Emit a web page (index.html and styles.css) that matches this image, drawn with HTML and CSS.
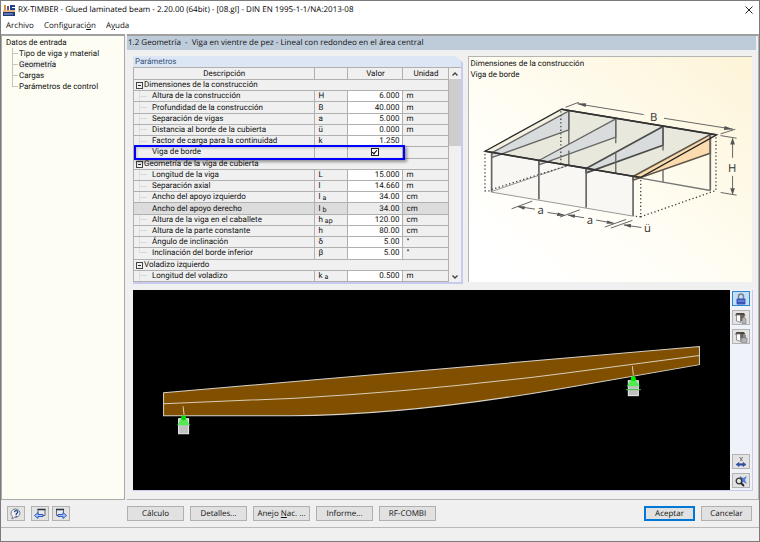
FILE: index.html
```html
<!DOCTYPE html>
<html lang="es">
<head>
<meta charset="utf-8">
<meta name="viewport" content="width=device-width, initial-scale=1">
<title>RX-TIMBER - Glued laminated beam</title>
<link rel="stylesheet" href="styles.css">
</head>
<body>
<div class="window">
  <header class="titlebar">
    <svg class="app-icon" viewBox="0 0 12 12" aria-hidden="true">
      <rect x="0" y="8" width="12" height="4" fill="#1d3b7a"/>
      <rect x="1" y="1" width="2" height="5" fill="#e08a3c"/>
      <rect x="4" y="2" width="2" height="4" fill="#4a5a80"/>
      <path d="M7 1h5v2H9v1h3v3H7z" fill="#25408a"/>
      <rect x="0" y="6" width="12" height="2" fill="#efb27c"/>
      <path d="M1 10h9" stroke="#9db2dc"/>
    </svg>
    <h1 class="title">RX-TIMBER - Glued laminated beam - 2.20.00 (64bit) - [08.gl] - DIN EN 1995-1-1/NA:2013-08</h1>
    <button class="close" type="button" aria-label="Cerrar">
      <svg viewBox="0 0 8 8" aria-hidden="true"><path d="M.5.5l7 7M7.500.5l-7 7" fill="none" stroke="#222"/></svg>
    </button>
  </header>
  <nav class="menubar">
    <button type="button">Archivo</button>
    <button type="button">Configuraci<u>ó</u>n</button>
    <button type="button">A<u>y</u>uda</button>
  </nav>

  <div class="workspace">
    <aside class="tree">
      <div class="tree-root">Datos de entrada</div>
      <ul>
        <li>Tipo de viga y material</li>
        <li><span class="current">Geometría</span></li>
        <li>Cargas</li>
        <li>Parámetros de control</li>
      </ul>
    </aside>

    <main class="page">
      <h2 class="page-title">1.2 Geometría&nbsp; -&nbsp; Viga en vientre de pez - Lineal con redondeo en el área central</h2>
      <div class="upper">
        <section class="params">
          <h3 class="params-title">Parámetros</h3>
          <div class="params-body">
            <table>
              <colgroup><col><col class="c-sym"><col class="c-val"><col class="c-unit"></colgroup>
              <thead><tr><th>Descripción</th><th></th><th>Valor</th><th>Unidad</th></tr></thead>
              <tbody>
                <tr class="group"><td colspan="4">Dimensiones de la construcción</td></tr>
                <tr><td>Altura de la construcción</td><td>H</td><td>6.000</td><td>m</td></tr>
                <tr><td>Profundidad de la construcción</td><td>B</td><td>40.000</td><td>m</td></tr>
                <tr><td>Separación de vigas</td><td>a</td><td>5.000</td><td>m</td></tr>
                <tr><td>Distancia al borde de la cubierta</td><td>ü</td><td>0.000</td><td>m</td></tr>
                <tr><td>Factor de carga para la continuidad</td><td>k</td><td>1.250</td><td></td></tr>
                <tr class="marked last"><td><label for="edge-beam">Viga de borde</label></td><td></td><td><input type="checkbox" id="edge-beam" checked></td><td></td></tr>
                <tr class="group"><td colspan="4">Geometría de la viga de cubierta</td></tr>
                <tr><td>Longitud de la viga</td><td>L</td><td>15.000</td><td>m</td></tr>
                <tr><td>Separación axial</td><td>l</td><td>14.660</td><td>m</td></tr>
                <tr><td>Ancho del apoyo izquierdo</td><td>l <sub>a</sub></td><td>34.00</td><td>cm</td></tr>
                <tr class="selected"><td>Ancho del apoyo derecho</td><td>l <sub>b</sub></td><td>34.00</td><td>cm</td></tr>
                <tr><td>Altura de la viga en el caballete</td><td>h <sub>ap</sub></td><td>120.00</td><td>cm</td></tr>
                <tr><td>Altura de la parte constante</td><td>h</td><td>80.00</td><td>cm</td></tr>
                <tr><td>Ángulo de inclinación</td><td>δ</td><td>5.00</td><td>°</td></tr>
                <tr class="last"><td>Inclinación del borde inferior</td><td>β</td><td>5.00</td><td>°</td></tr>
                <tr class="group"><td colspan="4">Voladizo izquierdo</td></tr>
                <tr><td>Longitud del voladizo</td><td>k <sub>a</sub></td><td>0.500</td><td>m</td></tr>
              </tbody>
            </table>
            <div class="scrollbar">
              <button type="button" aria-label="Subir"><svg viewBox="0 0 8 6" aria-hidden="true"><path d="M1.500 4.500L4 2l2.500 2.500" fill="none" stroke="#444" stroke-width="1.400"/></svg></button>
              <div class="track"><div class="thumb"></div></div>
              <button type="button" aria-label="Bajar"><svg viewBox="0 0 8 6" aria-hidden="true"><path d="M1.500 1.500L4 4l2.500-2.500" fill="none" stroke="#444" stroke-width="1.400"/></svg></button>
            </div>
          </div>
        </section>

        <section class="picture">
          <p>Dimensiones de la construcción</p>
          <p>Viga de borde</p>
          <svg viewBox="12 0 849 603" role="img" aria-label="B H a a ü">
            <path d="M80 217L505 288V407L80 335z" fill="#f8f7f3"/>
            <path d="M60 212L290 86L756 163L527 291z" fill="#e9e8dd"/>
            <path d="M60 212L290 86L312 90L80 216z" fill="#f5f2e2"/>
            <g fill="#d9dcdc" stroke="#666" stroke-width="4" stroke-linejoin="round">
              <path d="M80 217L312 91V148L80 231z"/>
              <path d="M222 240L453 115V170L222 253z"/>
              <path d="M364 264L595 138V194L364 277z" stroke="#4b4b4b" stroke-width="5"/>
            </g>
            <path d="M505 288L737 162V218L505 299z" fill="#fcdcae" stroke="#5b5347" stroke-width="5"/>
            <g fill="none" stroke="#666" stroke-width="5">
              <path d="M80 217V335M222 240V357M364 264V382M505 288V407M737 162V330"/>
              <path d="M312 90V190M312 210V255M453 115V188M453 216V278M595 138V210M595 266V305" stroke-width="4"/>
            </g>
            <path d="M80 335L505 407M80 333L312 254" fill="none" stroke="#999" stroke-width="3"/>
            <path d="M312 254L364 262M527 293L737 330" fill="none" stroke="#777" stroke-width="4"/>
            <path d="M60 212L290 86L756 163L527 291z" fill="none" stroke="#262626" stroke-width="4"/>
            <path d="M60 212L527 291M290 86L756 163" fill="none" stroke="#333" stroke-width="5"/>
            <g fill="none" stroke="#444" stroke-width="4" stroke-dasharray="4 7">
              <path d="M60 220V331H80M80 327L312 254M288 92V248M754 170V330L528 409V296M528 409L505 407"/>
            </g>
            <g fill="none" stroke="#666" stroke-width="3">
              <path d="M340 70L537 102M598 113L806 146M302 80L342 65M768 160L812 146M768 165L816 173M768 336L816 344"/>
              <path d="M804 176V232M804 286V340"/>
              <path d="M158 378L210 386M248 396L298 404M310 404L358 412M394 419L446 428M478 434L530 441"/>
              <path d="M140 385L202 362M285 410L345 388M420 440L484 417M438 443L503 420"/>
            </g>
            <g fill="#555">
              <path d="M336 69L364 68L362 79zM806 146L778 148L780 136zM804 171L797 192H811zM804 343L797 323H811z"/>
              <path d="M156 378L180 377L178 388zM302 405L276 407L279 396zM306 403L331 402L329 413zM450 429L425 430L428 420zM475 433L499 431L498 442z"/>
            </g>
            <g class="dims">
              <text x="556" y="121">B</text><text x="790" y="274">H</text>
              <text x="218" y="402">a</text><text x="366" y="430">a</text><text x="538" y="456">ü</text>
            </g>
          </svg>
        </section>
      </div>

      <section class="viewer">
        <svg class="scene" viewBox="133 290 596 200" role="img" aria-label="Viga">
          <path d="M163.500 392.500L698.500 346.500V364.500L560 388.500Q407 415 290 415.500H163.500z" fill="#805000" stroke="#d8d3ca"/>
          <path d="M163.500 403.500L295 398Q420 391.500 560 373.500L698.500 355.500" fill="none" stroke="#d8cdb8"/>
          <path d="M183 406L184 415M631.500 366L632.500 375" stroke="#d8cdb8"/>
          <rect x="178.500" y="418.500" width="10" height="15" fill="#c0c0c0" stroke="#f2f2f2"/>
          <path d="M183.500 415L190 425H177z" fill="#55e855"/>
          <circle cx="183.500" cy="417.500" r="2.500" fill="#00d800"/>
          <rect x="627.500" y="380.500" width="10" height="15" fill="#c0c0c0" stroke="#f2f2f2"/>
          <path d="M632.500 376L639 386H626z" fill="#55e855"/>
          <circle cx="632.500" cy="378.500" r="2.500" fill="#00f000"/>
          <path d="M625 389.500H640" stroke="#3fc43f"/>
        </svg>
        <div class="tools">
          <button type="button" class="on" aria-label="Bloquear"><svg viewBox="0 0 14 12" aria-hidden="true"><path d="M4.500 6V3.500a2.500 2.500 0 0 1 5 0V6" fill="none" stroke="#777f8c" stroke-width="1.500"/><rect x="2.500" y="5.500" width="9" height="6" rx="1" fill="#3657b8"/><path d="M4 8h6.500" stroke="#8aa5e8"/></svg></button>
          <button type="button" aria-label="Copiar vista"><svg viewBox="0 0 14 12" aria-hidden="true"><path d="M1 3.500L2.500 1H10l1.500 2.500z" fill="#4c443d"/><path d="M2.500 3h4v7.500l-4-1.500z" fill="#fff" stroke="#777" stroke-width=".8"/><path d="M6.500 3h4v6h-4z" fill="#6b625a"/><path d="M8 7l2-2 2 2v4.500H8z" fill="#b4b4b8" stroke="#777" stroke-width=".6"/></svg></button>
          <button type="button" aria-label="Imprimir vista"><svg viewBox="0 0 14 12" aria-hidden="true"><path d="M1 3.500L2.500 1H10l1.500 2.500z" fill="#4c443d"/><path d="M2.500 3h4v7.500l-4-1.500z" fill="#fff" stroke="#777" stroke-width=".8"/><path d="M6.500 3h3v4h-3z" fill="#6b625a"/><path d="M9 4h3v3H9z" fill="#8a8a90"/><path d="M7.500 7H13v4.500H7.500z" fill="#b4b4b8" stroke="#777" stroke-width=".6"/></svg></button>
          <span class="spacer"></span>
          <button type="button" aria-label="Acotaciones"><svg viewBox="0 0 14 12" aria-hidden="true"><path d="M5.500 1l3 4M8.500 1l-2 4" stroke="#666" stroke-width=".9"/><path d="M2 8.500l3-2v1.300h4V6.500l3 2-3 2V9.200H5v1.300z" fill="#3457b0" stroke="#27408a" stroke-width=".6"/></svg></button>
          <button type="button" aria-label="Ver todo"><svg viewBox="0 0 14 12" aria-hidden="true"><path d="M6 1l3 2 4-2-2 4 2 4-4-2-3 1z" fill="#5a7fd6"/><circle cx="5" cy="6" r="2.800" fill="#dfe5ec" stroke="#333" stroke-width="1.300"/><path d="M7 8l3 3" stroke="#222" stroke-width="1.800"/></svg></button>
        </div>
      </section>
    </main>
  </div>

  <footer class="actions">
    <div class="side">
      <button type="button" class="icon" aria-label="Ayuda"><svg viewBox="0 0 14 12" aria-hidden="true"><path d="M7 1a4.700 4.200 0 1 1-1.500 8.300L3 11l.5-2.500A4.500 4.300 0 0 1 7 1z" fill="#f6f6f6" stroke="#777"/><path d="M5.500 4.200q0-1.500 1.700-1.500t1.600 1.400Q8.700 5 7.200 5.800V7" fill="none" stroke="#24479e" stroke-width="1.300"/><path d="M6.500 7.800h1.400v1.300H6.500z" fill="#24479e"/></svg></button>
      <button type="button" class="icon" aria-label="Anterior"><svg viewBox="0 0 14 12" aria-hidden="true"><path d="M5 1.500h7v6H5z" fill="#e8e8e8" stroke="#667"/><path d="M4.500 1.500h8" stroke="#234" stroke-width="1.500"/><path d="M1.500 7.500L5 4.500v2h5v2H5v2z" fill="#a9c4f5" stroke="#2450b4" stroke-width=".9"/></svg></button>
      <button type="button" class="icon" aria-label="Siguiente"><svg viewBox="0 0 14 12" aria-hidden="true"><path d="M2.500 1.500h7v6h-7z" fill="#e8e8e8" stroke="#667"/><path d="M2 1.500h8" stroke="#234" stroke-width="1.500"/><path d="M12.500 7.500L9 4.500v2H4v2h5v2z" fill="#a9c4f5" stroke="#2450b4" stroke-width=".9"/></svg></button>
    </div>
    <div class="main-actions">
      <button type="button">Cálculo</button>
      <button type="button">Detalles...</button>
      <button type="button">Anejo <u>N</u>ac. ...</button>
      <button type="button">Informe...</button>
      <button type="button">RF-COMBI</button>
    </div>
    <div class="confirm">
      <button type="button" class="primary">Aceptar</button>
      <button type="button">Cancelar</button>
    </div>
  </footer>
  <div class="statusbar"></div>
</div>
</body>
</html>
```
FILE: styles.css
```css
*, *::before, *::after { box-sizing: border-box; }

body {
  margin: 0;
  font: 8px/11px Roboto, "Liberation Sans", sans-serif;
  text-rendering: geometricPrecision;
  color: #111;
}

h1, h2, h3, p, ul { margin: 0; padding: 0; font: inherit; }
button { font: inherit; color: inherit; padding: 0; text-rendering: inherit; }
svg { display: block; }

.window {
  display: flex;
  flex-direction: column;
  min-height: 100vh;
  border: 1px solid #7b7b7b;
  background: #f0f0f0;
}

.titlebar {
  display: flex;
  align-items: center;
  gap: 3px;
  height: 17px;
  padding: 0 6px 0 2px;
  background: #fff;
}
.app-icon { width: 12px; height: 12px; }
.title {
  flex: 1;
  font: 8px/12px "Open Sans", sans-serif;
  color: #000;
}
.close { border: 0; background: none; }
.close svg { width: 8px; height: 8px; }

.menubar {
  display: flex;
  gap: 10px;
  height: 16px;
  padding: 0 5px;
  background: #fff;
}
.menubar button {
  border: 0;
  background: none;
  font: 8px/14px "Open Sans", sans-serif;
}

.workspace {
  flex: 1;
  display: grid;
  grid-template-columns: 124px minmax(0, 1fr);
  gap: 2px;
}

.tree {
  border: 1px solid #a9a9a9;
  border-top: 2px solid #a0a0a0;
  background: #fdfdf3;
  padding: 1px 4px;
}
.tree ul { list-style: none; padding-left: 6px; }
.tree li {
  position: relative;
  padding-left: 7px;
}
.tree li::before {
  content: "";
  position: absolute;
  left: 0;
  top: 0;
  width: 6px;
  height: 6px;
  border-left: 1px solid #c4c4c0;
  border-bottom: 1px solid #c4c4c0;
}
.tree li:not(:last-child)::after {
  content: "";
  position: absolute;
  left: 0;
  top: 0;
  bottom: 0;
  border-left: 1px solid #c4c4c0;
}
.current { background: #f0f0ee; }

.page {
  display: flex;
  flex-direction: column;
  border: 1px solid #b4b4b4;
  border-top: 2px solid #a0a0a0;
  border-left: 0;
}
.page-title {
  height: 14px;
  margin-right: 2px;
  padding-left: 1px;
  background: #becbd9;
  font: 8px/14px "Open Sans", sans-serif;
  color: #111;
}

.upper {
  display: grid;
  grid-template-columns: 331fr 284fr;
  gap: 5px;
  min-height: 228px;
  margin: 6px 6px 0;
}
.params {
  display: flex;
  flex-direction: column;
  border-right: 2px solid #c9cbee;
  border-bottom: 2px solid #c9cbee;
  clip-path: polygon(0 0, calc(100% - 8px) 0, 100% 7px, 100% 100%, 0 100%);
}
.params-title {
  height: 11px;
  padding-left: 2px;
  background: #dde6f5;
  color: #35547c;
}
.params-body { flex: 1; display: flex; }

table {
  flex: 1;
  min-width: 0;
  height: 100%;
  table-layout: fixed;
  border-collapse: separate;
  border-spacing: 0;
  border-top: 1px solid #b0b0b0;
  border-left: 1px solid #b0b0b0;
}
.c-sym { width: 33px; }
.c-val { width: 55px; }
.c-unit { width: 46px; }
th, td {
  padding: 0 3px;
  border-right: 1px solid #b0b0b0;
  border-bottom: 1px solid #b0b0b0;
  font: 8px/10px Roboto, "Liberation Sans", sans-serif;
  white-space: nowrap;
  text-align: left;
}
th { height: 12px; text-align: center; }
td:first-child { position: relative; padding-left: 18px; }
td:nth-child(3) { background: #fff; text-align: right; }
tr.selected td { background: #dcdcdc; }
tr.selected td:nth-child(3) { background: #ececec; }
sub { font-size: 7px; line-height: 1px; vertical-align: -1px; }

tbody tr:not(.group) td:first-child::before {
  content: "";
  position: absolute;
  left: 5px;
  top: 0;
  bottom: 0;
  width: 8px;
  border-left: 1px solid #dedede;
  background: linear-gradient(#d8d8d8, #d8d8d8) 0 50% / 100% 1px no-repeat;
}
tbody tr.last:not(.group) td:first-child::before { bottom: 50%; background-position: 0 100%; }

tbody tr.group td:first-child { padding-left: 10px; }
.group td::before {
  content: "";
  position: absolute;
  left: 2px;
  top: 2px;
  width: 7px;
  height: 7px;
  border: 1px solid #444;
  background: linear-gradient(#222, #222) 50% 50% / 3px 1px no-repeat;
}

.marked { position: relative; }
tr.marked td:first-child { position: static; }
tr.marked td:first-child::before { display: none; }
tr.marked td:first-child::after {
  content: "";
  position: absolute;
  z-index: 1;
  inset: -2px 44px -1px 0;
  border: 2px solid #00f;
  box-shadow: 2px 2px 3px rgba(0, 0, 0, .4), inset 1px 1px 3px rgba(0, 0, 0, .2);
  pointer-events: none;
}
tr.marked td:nth-child(3) { background: #f0f0f0; text-align: center; }
tr.marked input {
  appearance: none;
  display: block;
  width: 8px;
  height: 8px;
  margin: 0 auto;
  border: 1px solid #222;
  background: #fff;
  position: relative;
}
tr.marked input:checked::after {
  content: "";
  position: absolute;
  left: 1px;
  top: 0;
  width: 3px;
  height: 5px;
  border: solid #000;
  border-width: 0 1px 1px 0;
  transform: rotate(40deg);
}

.scrollbar {
  display: flex;
  flex-direction: column;
  width: 12px;
  border-top: 1px solid #b0b0b0;
}
.scrollbar button {
  display: grid;
  place-items: center;
  height: 11px;
  border: 0;
  background: none;
}
.scrollbar svg { width: 8px; height: 6px; }
.track { flex: 1; }
.thumb { height: 35%; background: #cdcdcd; }

.picture {
  display: flex;
  flex-direction: column;
  border: 1px solid #b4b4b4;
  border-width: 1px 0 0 1px;
  margin-bottom: 2px;
  padding-top: 1px;
  background: linear-gradient(to top right, #fff 10%, #fffdf4 45%, #fdf4d8);
}
.picture p { padding-left: 1px; }
.picture svg { flex: 1; width: 100%; min-height: 0; }
.dims { font-family: "Open Sans", sans-serif; font-size: 34px; fill: #333; }

.viewer {
  flex: 1;
  display: flex;
  min-height: 200px;
  margin: 6px 5px 8px 6px;
  border-right: 1px solid #c9cbee;
  border-bottom: 1px solid #c9cbee;
}
.scene { flex: 1; min-width: 0; background: #000; }
.tools {
  display: flex;
  flex-direction: column;
  gap: 4px;
  width: 22px;
  padding: 1px 2px 2px;
  background: #eff3f9;
}
.spacer { flex: 1; }
.tools button,
.icon {
  display: grid;
  place-items: center;
  width: 18px;
  height: 15px;
  border: 1px solid #b2b2b2;
  background: #e3e3e3;
}
.tools svg, .icon svg { width: 14px; height: 12px; }
.tools .on { border-color: #2c86cf; background: #c4dff5; }

.actions {
  display: flex;
  align-items: center;
  height: 27px;
  padding: 0 7px 0 6px;
}
.side { display: flex; gap: 3px; width: 120px; }
.side .icon:first-child { margin-right: 3px; }
.main-actions, .confirm { display: flex; gap: 6px; }
.main-actions { flex: 1; }
.main-actions button, .confirm button {
  width: 57px;
  height: 15px;
  border: 1px solid #b0b0b0;
  background: #e1e1e1;
  font: 8px/12px "Open Sans", sans-serif;
}
.confirm button { width: 51px; }
.confirm .primary { border: 1px solid #0078d7; outline: 1px solid #0078d7; outline-offset: -2px; }

.statusbar {
  height: 14px;
  border-top: 1px solid #b8b8b8;
}
```
